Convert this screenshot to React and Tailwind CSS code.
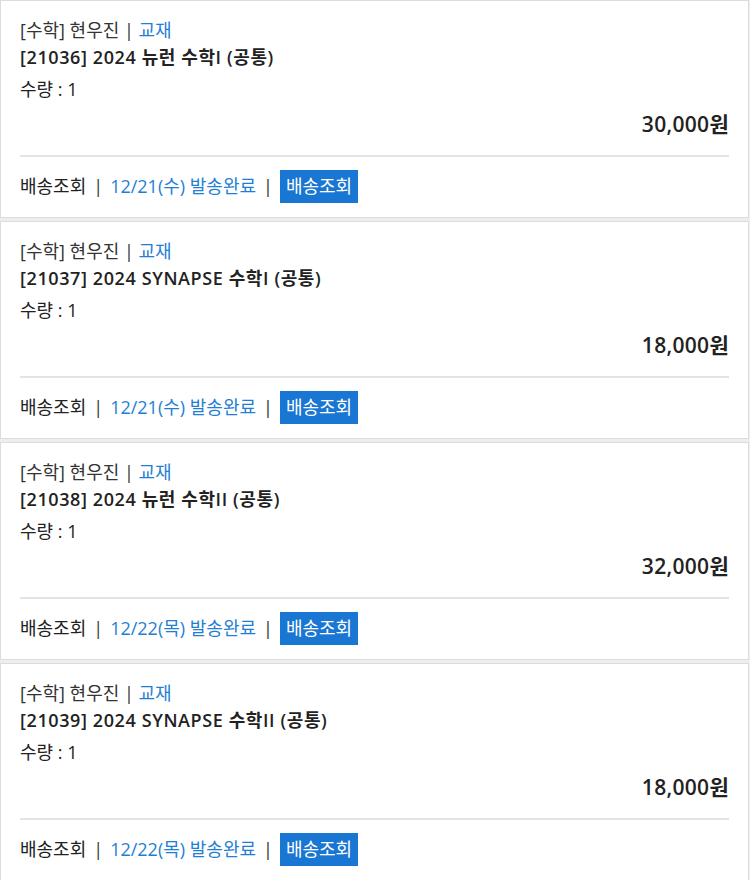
import React from "react";

const items = [
  { code: "21036", name: "2024 뉴런 수학I (공통)", price: "30,000원", date: "12/21(수)" },
  { code: "21037", name: "2024 SYNAPSE 수학I (공통)", price: "18,000원", date: "12/21(수)" },
  { code: "21038", name: "2024 뉴런 수학II (공통)", price: "32,000원", date: "12/22(목)" },
  { code: "21039", name: "2024 SYNAPSE 수학II (공통)", price: "18,000원", date: "12/22(목)" },
];

function Card({ it }) {
  return (
    <div className="h-[218px] shrink-0 border border-[#dcdcdc] bg-white pt-[16px] px-[19px]">
      <div className="text-[18px] leading-[26px] text-[#333]">
        [수학] 현우진 <span className="text-[#333]">|</span> <span className="text-[#1f7fd4]">교재</span>
      </div>
      <div className="text-[18px] leading-[28px] font-semibold tracking-[0.6px] text-[#222]">
        [{it.code}] {it.name}
      </div>
      <div className="mt-[4px] text-[18px] leading-[28px] text-[#222]">수량 : 1</div>
      <div className="mt-[7px] text-right text-[21px] leading-[28px] font-semibold tracking-[0.3px] text-[#222]">
        {it.price}
      </div>
      <div className="mt-[17px] h-[2px] bg-[#e3e3e3]" />
      <div className="mt-[13px] flex h-[33px] items-center text-[18px] text-[#222]">
        <span>배송조회</span>
        <span className="mx-[7px] text-[#333]">|</span>
        <span className="text-[#1f7fd4]">{it.date} 발송완료</span>
        <span className="mx-[7px] text-[#333]">|</span>
        <span className="flex h-[33px] items-center bg-[#1976d2] px-[6px] text-white">배송조회</span>
      </div>
    </div>
  );
}

export default function App() {
  return (
    <div
      className="flex h-[880px] w-[750px] flex-col gap-[3px] overflow-hidden bg-[#eeeeee] pr-[1px]"
      style={{ fontFamily: '"Open Sans", "Noto Sans CJK KR", sans-serif' }}
    >
      {items.map((it) => (
        <Card key={it.code} it={it} />
      ))}
    </div>
  );
}
